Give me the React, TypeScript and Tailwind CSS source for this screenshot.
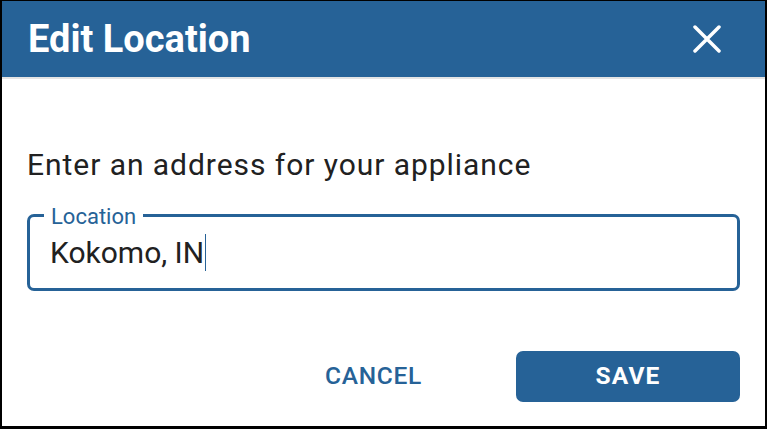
export default function App() {
  return (
    <div className="w-[767px] h-[429px] bg-white border-black border-t border-l-2 border-r-2 border-b-[3px] flex flex-col font-['Roboto',sans-serif]">
      <div className="h-[78px] shrink-0 bg-[#266297] border-b-2 border-[#e4e4e4] flex items-center justify-between pl-[26px] pr-[44px]">
        <h1 className="text-[38px] leading-none font-bold text-white">Edit Location</h1>
        <button aria-label="Close">
          <svg width="28" height="28" viewBox="0 0 28 28" fill="none">
            <path d="M2 2L26 26M26 2L2 26" stroke="white" strokeWidth="3.5" strokeLinecap="round" />
          </svg>
        </button>
      </div>

      <div className="flex-1 flex flex-col px-[25px] pt-[70px]">
        <p className="text-[30px] leading-[32px] text-[#212121] tracking-[0.95px]">
          Enter an address for your appliance
        </p>

        <div className="relative mt-[33px] h-[77px] border-[3px] border-[#266297] rounded-[7px] flex items-center pl-[20px]">
          <span className="absolute -top-[11px] left-[14px] px-[7px] bg-white text-[22px] leading-[22px] text-[#266297]">
            Location
          </span>
          <span className="text-[30px] leading-[32px] text-[#212121]">Kokomo, IN</span>
          <span className="w-px h-[37px] bg-[#266297] ml-px" />
        </div>

        <div className="mt-[60px] flex items-center justify-end">
          <button className="h-[51px] px-[16px] mr-[78px] text-[24.5px] font-medium tracking-[0.7px] text-[#266297]">
            CANCEL
          </button>
          <button className="w-[224px] h-[51px] rounded-[7px] bg-[#266297] text-white text-[24.5px] font-bold tracking-[1.2px]">
            SAVE
          </button>
        </div>
      </div>
    </div>
  );
}
